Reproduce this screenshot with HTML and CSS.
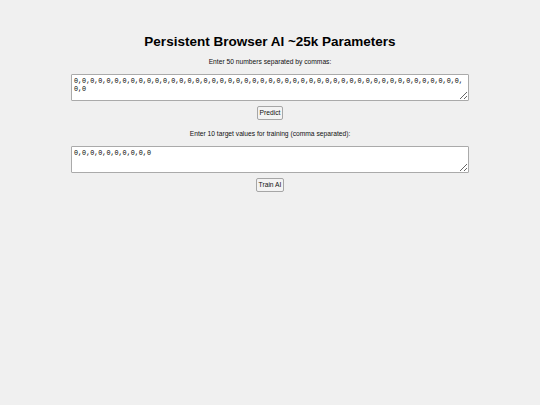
FILE: index.html
```html
<!DOCTYPE html>
<html>
<head>
<meta charset="utf-8">
<title>Persistent Browser AI</title>
<link rel="stylesheet" href="styles.css">
</head>
<body>
<main class="page">
  <h1 class="title">Persistent Browser AI ~25k Parameters</h1>
  <p class="label label-first">Enter 50 numbers separated by commas:</p>
  <textarea class="field">0,0,0,0,0,0,0,0,0,0,0,0,0,0,0,0,0,0,0,0,0,0,0,0,0,0,0,0,0,0,0,0,0,0,0,0,0,0,0,0,0,0,0,0,0,0,0,0,0,0</textarea>
  <button class="btn">Predict</button>
  <p class="label">Enter 10 target values for training (comma separated):</p>
  <textarea class="field">0,0,0,0,0,0,0,0,0,0</textarea>
  <button class="btn">Train AI</button>
</main>
</body>
</html>
```
FILE: styles.css
```css
html, body {
  margin: 0;
  padding: 0;
  background: #f0f0f0;
}
.page {
  display: flex;
  flex-direction: column;
  align-items: center;
  padding-top: 34px;
  font-family: "Liberation Sans", Arial, sans-serif;
  color: #000;
}
.title {
  margin: 0;
  font-size: 13.5px;
  line-height: 16px;
  font-weight: bold;
}
.label {
  margin: 8.5px 0 0;
  font-size: 6.7px;
  line-height: 9px;
  color: #111;
}
.label-first {
  margin-top: 6.5px;
}
.field {
  box-sizing: border-box;
  width: 398px;
  height: 27px;
  margin: 8.5px 0 0;
  padding: 3px 2px;
  border: 1px solid #aaaaaa;
  border-radius: 1px;
  background: #fff;
  font-family: "Liberation Mono", "DejaVu Sans Mono", monospace;
  font-size: 6.75px;
  line-height: 7.5px;
  color: #000;
  overflow: hidden;
}
.btn {
  margin: 5px 0 0;
  padding: 2px 1.5px;
  font-family: "Liberation Sans", Arial, sans-serif;
  font-size: 6.7px;
  line-height: 8px;
  background: #f3f3f3;
  border: 1px solid #a6a6a6;
  border-radius: 2px;
  color: #111;
}
```
